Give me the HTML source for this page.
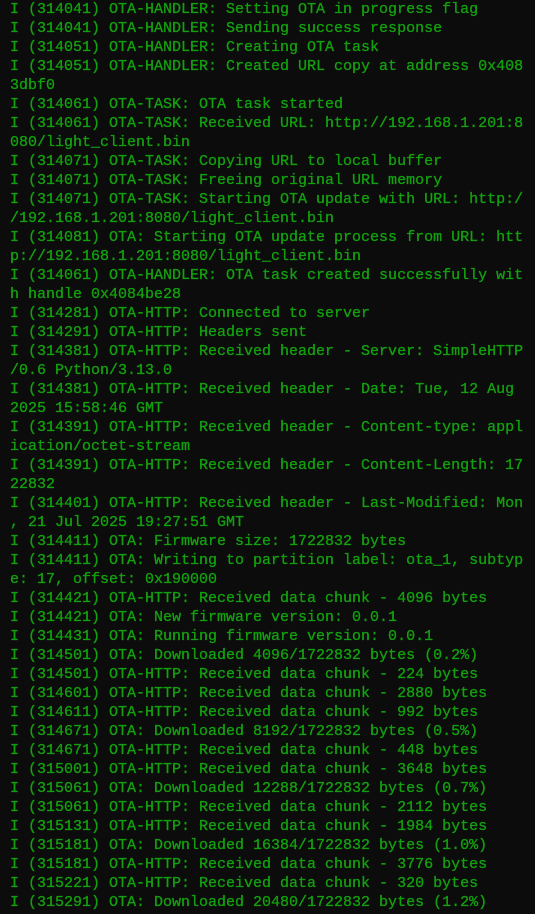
<!DOCTYPE html>
<html><head><meta charset="utf-8"><style>
html,body{margin:0;padding:0;background:#0c0c0c;width:535px;height:914px;overflow:hidden}
pre{margin:0;padding:0 0 0 10px;font-family:"Liberation Mono","DejaVu Sans Mono",monospace;font-size:15px;line-height:19px;color:#13a10e;white-space:pre;-webkit-text-stroke:0.3px #13a10e}
</style></head><body><pre>I (314041) OTA-HANDLER: Setting OTA in progress flag
I (314041) OTA-HANDLER: Sending success response
I (314051) OTA-HANDLER: Creating OTA task
I (314051) OTA-HANDLER: Created URL copy at address 0x408
3dbf0
I (314061) OTA-TASK: OTA task started
I (314061) OTA-TASK: Received URL: http://192.168.1.201:8
080/light_client.bin
I (314071) OTA-TASK: Copying URL to local buffer
I (314071) OTA-TASK: Freeing original URL memory
I (314071) OTA-TASK: Starting OTA update with URL: http:/
/192.168.1.201:8080/light_client.bin
I (314081) OTA: Starting OTA update process from URL: htt
p://192.168.1.201:8080/light_client.bin
I (314061) OTA-HANDLER: OTA task created successfully wit
h handle 0x4084be28
I (314281) OTA-HTTP: Connected to server
I (314291) OTA-HTTP: Headers sent
I (314381) OTA-HTTP: Received header - Server: SimpleHTTP
/0.6 Python/3.13.0
I (314381) OTA-HTTP: Received header - Date: Tue, 12 Aug
2025 15:58:46 GMT
I (314391) OTA-HTTP: Received header - Content-type: appl
ication/octet-stream
I (314391) OTA-HTTP: Received header - Content-Length: 17
22832
I (314401) OTA-HTTP: Received header - Last-Modified: Mon
, 21 Jul 2025 19:27:51 GMT
I (314411) OTA: Firmware size: 1722832 bytes
I (314411) OTA: Writing to partition label: ota_1, subtyp
e: 17, offset: 0x190000
I (314421) OTA-HTTP: Received data chunk - 4096 bytes
I (314421) OTA: New firmware version: 0.0.1
I (314431) OTA: Running firmware version: 0.0.1
I (314501) OTA: Downloaded 4096/1722832 bytes (0.2%)
I (314501) OTA-HTTP: Received data chunk - 224 bytes
I (314601) OTA-HTTP: Received data chunk - 2880 bytes
I (314611) OTA-HTTP: Received data chunk - 992 bytes
I (314671) OTA: Downloaded 8192/1722832 bytes (0.5%)
I (314671) OTA-HTTP: Received data chunk - 448 bytes
I (315001) OTA-HTTP: Received data chunk - 3648 bytes
I (315061) OTA: Downloaded 12288/1722832 bytes (0.7%)
I (315061) OTA-HTTP: Received data chunk - 2112 bytes
I (315131) OTA-HTTP: Received data chunk - 1984 bytes
I (315181) OTA: Downloaded 16384/1722832 bytes (1.0%)
I (315181) OTA-HTTP: Received data chunk - 3776 bytes
I (315221) OTA-HTTP: Received data chunk - 320 bytes
I (315291) OTA: Downloaded 20480/1722832 bytes (1.2%)</pre></body></html>
